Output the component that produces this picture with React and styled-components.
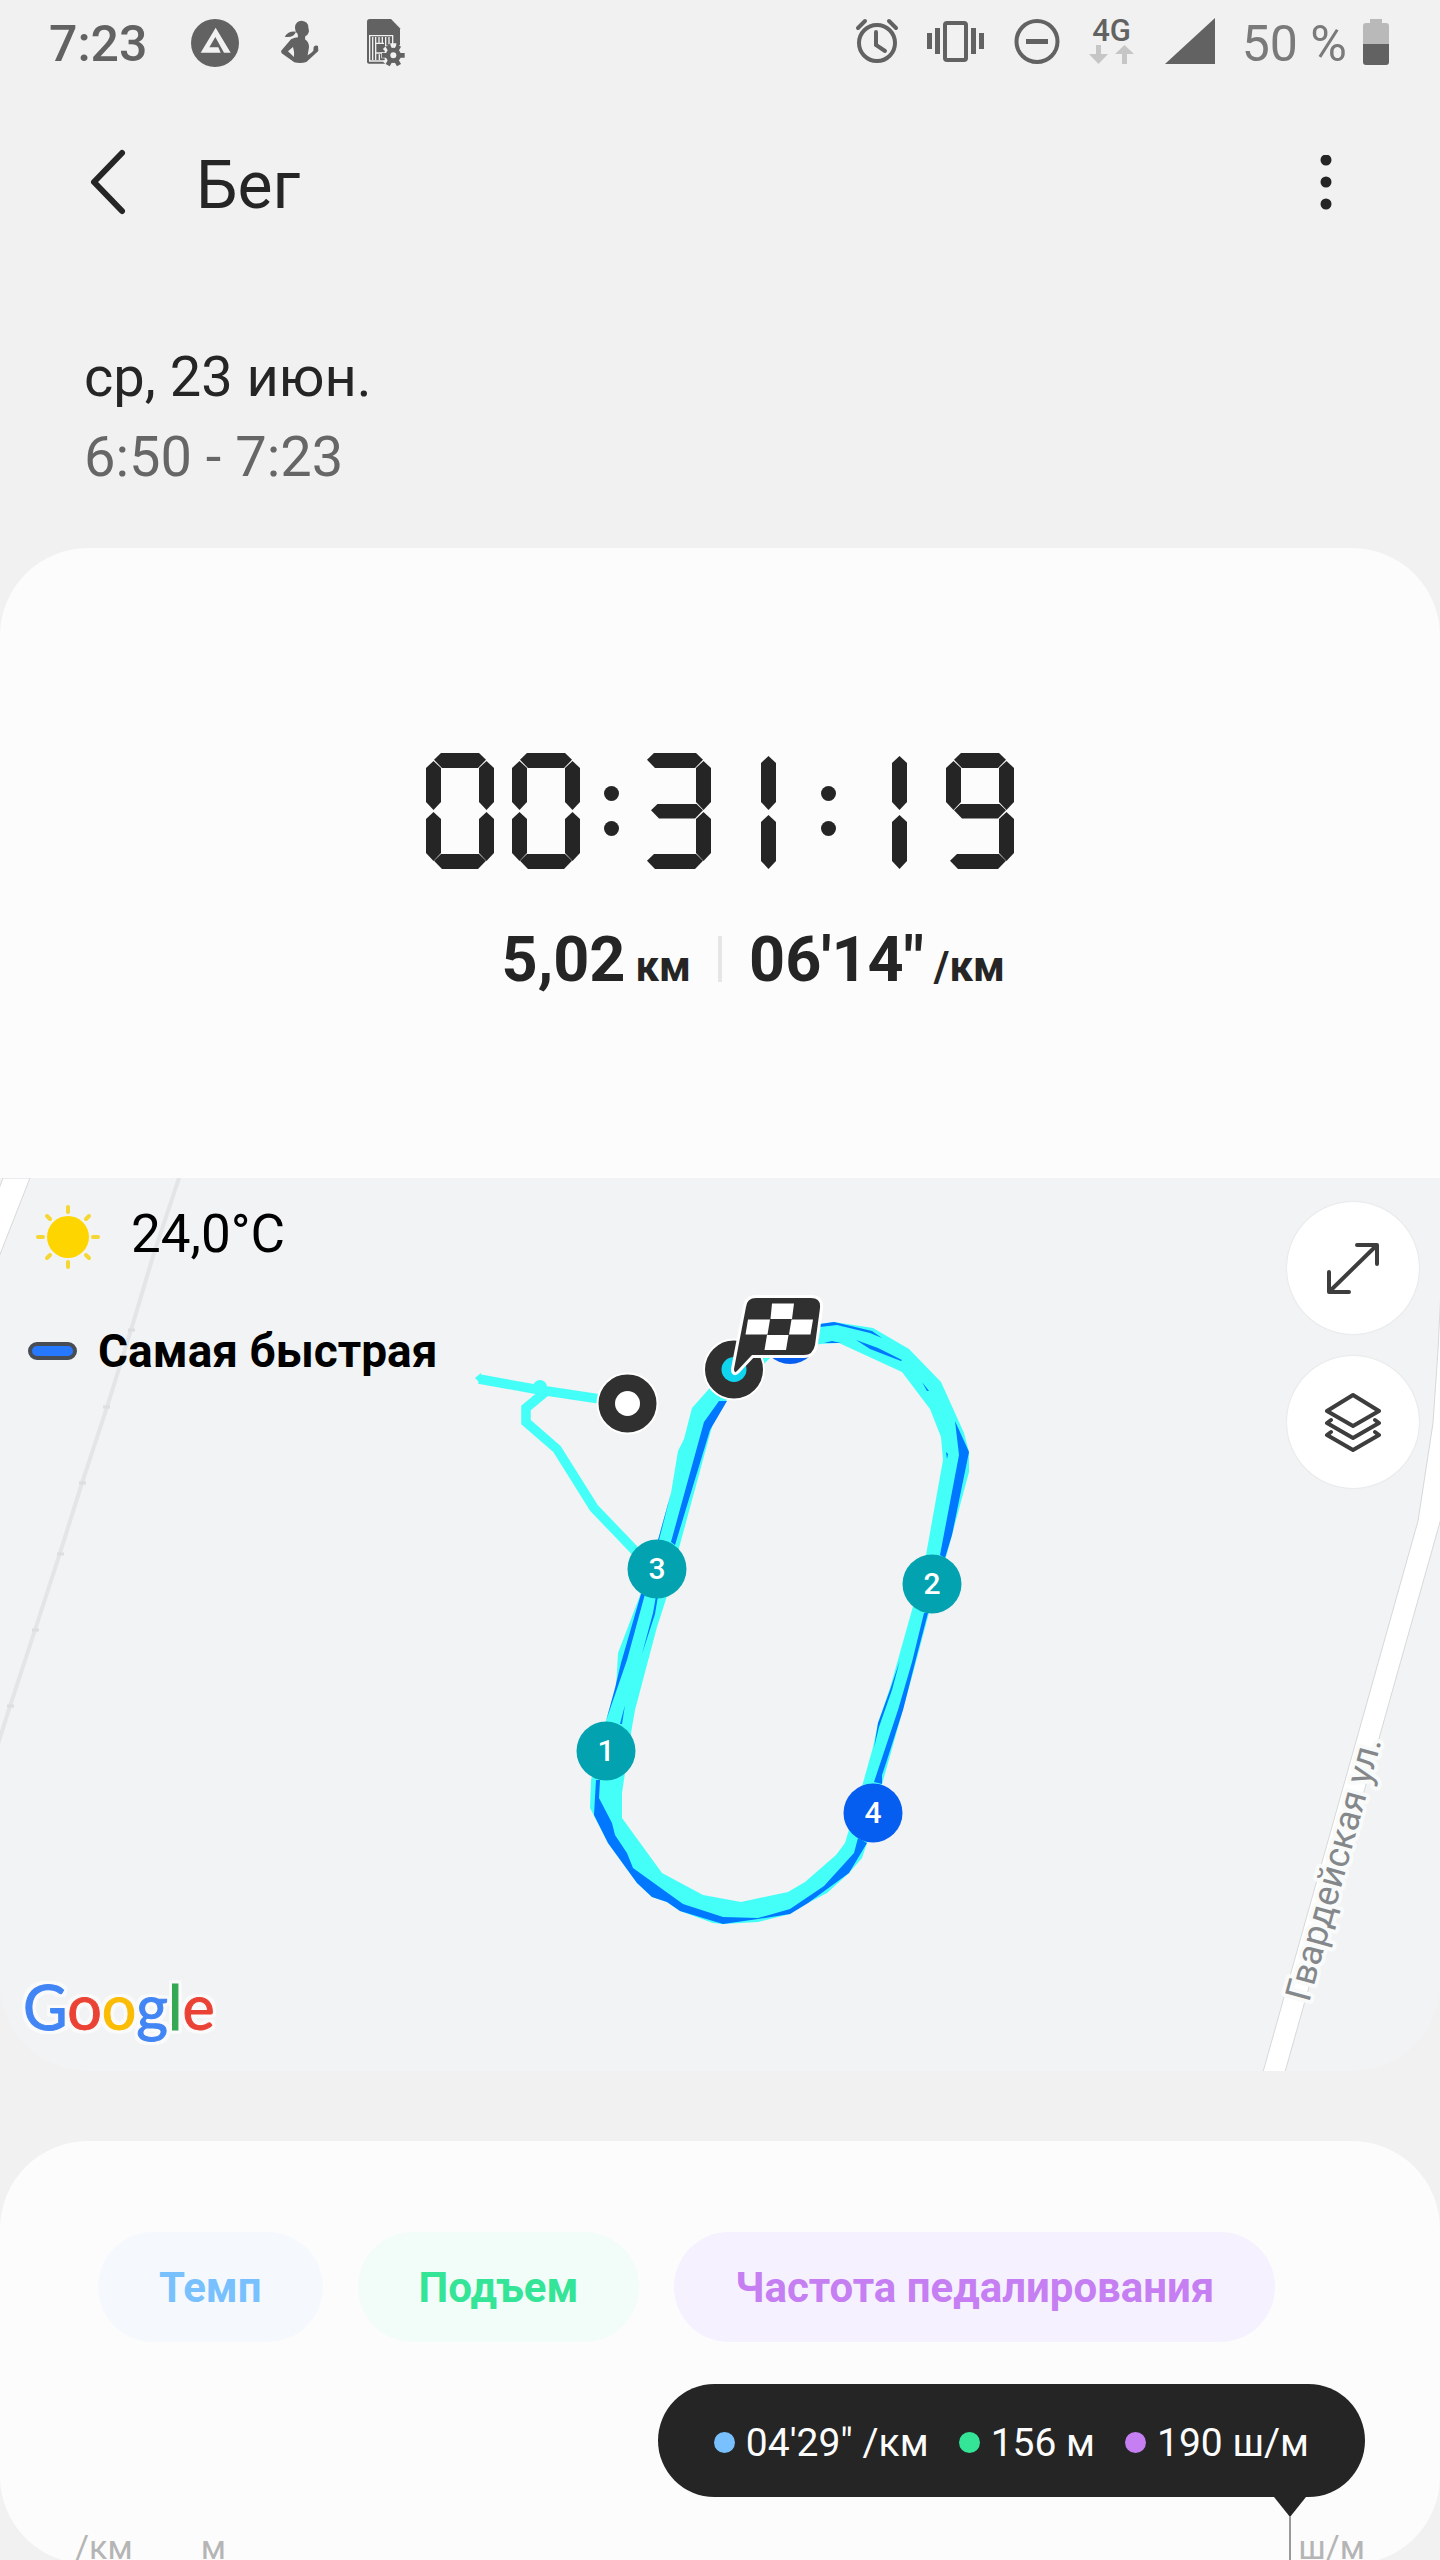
import { useState } from 'react';
import styled, { createGlobalStyle } from 'styled-components';

const GlobalStyle = createGlobalStyle`
    * {
        box-sizing: border-box;
    }

    body {
        margin: 0;
        background-color: #f1f1f1;
        font-family: Roboto, 'Noto Sans', sans-serif;
        color: #252525;
    }

    button {
        padding: 0;
        border: none;
        background: none;
        font-family: inherit;
        color: inherit;
        cursor: pointer;
    }

    svg {
        display: block;
    }
`;

const Screen = styled.div`
    height: 100vh;
    overflow-x: hidden;
    overflow-y: auto;
    scrollbar-width: none;
    background-color: #f1f1f1;
`;

/* status bar */

const StatusBar = styled.div`
    display: flex;
    justify-content: space-between;
    align-items: center;
    height: 86px;
    padding: 0 51px 0 49px;
    color: #626262;
`;

const StatusGroup = styled.div`
    display: flex;
    align-items: center;
    gap: ${({ $gap }) => $gap}px;
`;

const Clock = styled.time`
    padding: 2px 6px 0 0;
    font-size: 50px;
    font-weight: 500;
    line-height: 58px;
`;

const Percent = styled.span`
    padding: 2px 0 0 8px;
    font-size: 50px;
    line-height: 58px;
    color: #7a7a7a;
`;

const NoticeIcon = styled.svg`
    width: 48px;
    height: 48px;
    fill: #626262;
`;

const SlotIcon = styled.svg`
    width: 57px;
    height: 58px;
    fill: #626262;
    overflow: visible;
`;

const BatteryIcon = styled.svg`
    width: 26px;
    height: 58px;
`;

/* header */

const Header = styled.header`
    display: flex;
    align-items: center;
    height: 194px;
    padding: 0 68px 0 62px;
`;

const IconButton = styled.button`
    display: flex;
    justify-content: center;
    align-items: center;
    width: 92px;
    height: 92px;
`;

const Title = styled.h1`
    flex: 1;
    margin: 0;
    padding: 5px 0 0 42px;
    font-size: 66px;
    font-weight: 400;
    line-height: 80px;
`;

const DateBlock = styled.div`
    padding: 57px 84px 51px;
    font-size: 56px;
    line-height: 80px;
`;

const DateLine = styled.div`
    color: ${({ $muted }) => ($muted ? '#666' : '#252525')};
`;

/* summary card */

const SummaryCard = styled.section`
    padding: 205px 0 194px;
    border-radius: 88px 88px 0 0;
    background-color: #fcfcfc;
`;

const Timer = styled.div`
    display: flex;
    justify-content: center;
    align-items: center;
    gap: 24px;
`;

const DigitPair = styled.div`
    display: flex;
    gap: 18px;
`;

const DigitBox = styled.div`
    display: grid;
    width: 68px;
    height: 116px;
    padding-right: ${({ $narrow }) => ($narrow ? 21 : 0)}px;
`;

const Bar = styled.i`
    grid-area: 1 / 1;
    justify-self: end;
    align-self: ${({ $at }) => $at};
    width: ${({ $wide }) => ($wide ? 56 : 52)}px;
    height: 15px;
    margin-right: 8px;
    background-color: #252525;
    clip-path: polygon(0 45%, 7px 0, calc(100% - 7px) 0, 100% 45%, calc(100% - 8px) 100%, 8px 100%);
`;

const Post = styled.i`
    grid-area: 1 / 1;
    justify-self: ${({ $side }) => $side};
    align-self: ${({ $at }) => $at};
    width: 15px;
    height: ${({ $long }) => ($long ? 54 : 49)}px;
    margin: ${({ $long }) => ($long ? '3px 0 0' : '8px 0')};
    background-color: #252525;
    clip-path: polygon(50% 0, 100% 7px, 100% calc(100% - 8px), 50% 100%, 0 calc(100% - 8px), 0 7px);
`;

const Colon = styled.div`
    display: flex;
    flex-direction: column;
    gap: 20px;

    i {
        width: 15px;
        height: 15px;
        border-radius: 50%;
        background-color: #252525;
    }
`;

const Totals = styled.div`
    display: grid;
    grid-template-columns: 1fr 4px 1fr;
    column-gap: 27px;
    margin-top: 67px;
    font-weight: 700;
    line-height: 48px;
`;

const Total = styled.div`
    display: flex;
    justify-content: ${({ $end }) => ($end ? 'flex-end' : 'flex-start')};
    align-items: baseline;
    gap: 10px;
    height: 48px;
    font-size: 63px;
`;

const Unit = styled.span`
    font-size: 42px;
`;

const Divider = styled.div`
    height: 46px;
    background-color: #e6e6e6;
`;

/* map */

const MapArea = styled.section`
    display: grid;
    overflow: hidden;
    border-radius: 0 0 88px 88px;
    background-color: #f1f3f4;

    > * {
        grid-area: 1 / 1;
    }
`;

const MapCanvas = styled.svg`
    width: 100%;
    height: 893px;
`;

const MapOverlay = styled.div`
    display: flex;
    justify-content: space-between;
    padding: 24px 21px 28px 22px;
`;

const MapInfo = styled.div`
    display: flex;
    flex-direction: column;
    color: #000;
`;

const Weather = styled.div`
    display: flex;
    align-items: flex-start;
    gap: 27px;
    height: 70px;
    padding-left: 10px;
    font-size: 53px;
    line-height: 64px;
`;

const Legend = styled.div`
    display: flex;
    align-items: center;
    gap: 21px;
    margin-top: 49px;
    padding-left: 6px;
    font-size: 46px;
    font-weight: 700;
    line-height: 60px;
`;

const LegendMark = styled.span`
    width: 49px;
    height: 18px;
    border: 4px solid #484c55;
    border-radius: 9px;
    background-color: #2678ff;
`;

const Wordmark = styled.div`
    margin-top: auto;
    padding-left: 1px;
    font-family: Lato, Roboto, sans-serif;
    font-size: 61px;
    line-height: 72px;
    -webkit-text-stroke: 1px;
    filter: drop-shadow(3px 0 0 #fafafa) drop-shadow(-3px 0 0 #fafafa) drop-shadow(0 3px 0 #fafafa) drop-shadow(0 -3px 0 #fafafa);
`;

const Letter = styled.span`
    color: ${({ $color }) => $color};
`;

const MapButtons = styled.div`
    display: flex;
    flex-direction: column;
    gap: 22px;
`;

const RoundButton = styled.button`
    display: flex;
    justify-content: center;
    align-items: center;
    width: 132px;
    height: 132px;
    border-radius: 50%;
    background-color: #fff;
    box-shadow: 0 0 2px rgba(0, 0, 0, 0.12);
`;

const LineIcon = styled.svg`
    width: 60px;
    height: 60px;
    fill: none;
    stroke: #3d3d3d;
    stroke-width: 4;
    stroke-linecap: round;
    stroke-linejoin: round;
`;

/* chart card */

const ChartCard = styled.section`
    margin-top: 70px;
    padding: 91px 75px 0;
    border-radius: 88px;
    background-color: #fcfcfc;
`;

const Chips = styled.div`
    display: flex;
    gap: 35px;
    padding-left: 23px;
`;

const Chip = styled.button`
    height: 110px;
    padding: 2px 61px 0;
    border-radius: 55px;
    background-color: ${({ $bg }) => $bg};
    color: ${({ $color }) => $color};
    font-size: 42px;
    font-weight: 700;
    line-height: 50px;
    white-space: nowrap;
    opacity: ${({ $off }) => ($off ? 0.4 : 1)};
`;

const Tooltip = styled.div`
    position: relative;
    display: flex;
    align-items: center;
    gap: 30px;
    width: fit-content;
    height: 113px;
    margin: 42px 0 0 auto;
    padding: 4px 56px 0;
    border-radius: 57px;
    background-color: #252525;
    color: #fcfcfc;
    font-size: 39px;
    line-height: 48px;

    &::before {
        content: '';
        position: absolute;
        top: 100%;
        right: 59px;
        border: 16px solid transparent;
        border-top: 20px solid #252525;
        border-bottom: 0;
    }

    &::after {
        content: '';
        position: absolute;
        top: calc(100% + 19px);
        right: 74px;
        width: 2px;
        height: 48px;
        background-color: #999;
    }
`;

const Reading = styled.span`
    display: flex;
    align-items: center;
    gap: 11px;
    white-space: nowrap;

    &::before {
        content: '';
        width: 21px;
        height: 21px;
        border-radius: 50%;
        background-color: ${({ $color }) => $color};
    }
`;

const AxisLabels = styled.div`
    display: flex;
    gap: 68px;
    margin-top: 33px;
    color: #b5b5b5;
    font-size: 34px;
    line-height: 34px;

    span:last-child {
        margin-left: auto;
    }
`;

// a: top, b: top right, c: bottom right, d: bottom, e: bottom left, f: top left, g: middle
const SEGMENTS = {
    0: 'abcdef',
    1: 'bc',
    2: 'abdeg',
    3: 'abcdg',
    4: 'bcfg',
    5: 'acdfg',
    6: 'acdefg',
    7: 'abc',
    8: 'abcdefg',
    9: 'abcdfg',
};

const Digit = ({ value }) => {
    const on = (s) => SEGMENTS[value].includes(s);
    return (
        <DigitBox $narrow={value === '1'}>
            {on('a') && <Bar $at="start" $wide={!on('f')} />}
            {on('g') && <Bar $at="center" />}
            {on('d') && <Bar $at="end" $wide={!on('e')} />}
            {on('f') && <Post $side="start" $at="start" />}
            {on('b') && <Post $side="end" $at="start" $long={!on('a')} />}
            {on('e') && <Post $side="start" $at="end" />}
            {on('c') && <Post $side="end" $at="end" $long={!on('d')} />}
        </DigitBox>
    );
};

const SegmentTimer = ({ time }) => {
    const [h, m, s] = time.split(':');
    const pair = (v) => (
        <DigitPair>
            <Digit value={v[0]} />
            <Digit value={v[1]} />
        </DigitPair>
    );
    return (
        <Timer role="img" aria-label={time}>
            {pair(h)}
            <Colon><i /><i /></Colon>
            {pair(m)}
            <Colon><i /><i /></Colon>
            {pair(s)}
        </Timer>
    );
};

const StatusIcons = () => (
    <StatusGroup $gap={21}>
        <SlotIcon viewBox="850 14 57 58">
            <circle cx="878" cy="43" r="18" fill="none" stroke="#626262" strokeWidth="4" />
            <path d="M877 32v13l9 6M859 28l7-7M897 28l-7-7" fill="none" stroke="#626262" strokeWidth="4" strokeLinecap="round" />
        </SlotIcon>
        <SlotIcon viewBox="929 14 57 58">
            <rect x="947" y="23" width="21" height="37" rx="2" fill="none" stroke="#626262" strokeWidth="4" />
            <path d="M929 33h5v16h-5zM937 28h5v26h-5zM973 28h5v26h-5zM981 33h5v16h-5z" />
        </SlotIcon>
        <SlotIcon viewBox="1005 14 57 58">
            <circle cx="1037" cy="41.5" r="20.5" fill="none" stroke="#626262" strokeWidth="4" />
            <path d="M1026 39h22v5h-22z" />
        </SlotIcon>
        <SlotIcon viewBox="1084 14 57 58">
            <text x="1112.5" y="41" fontSize="31" fontWeight="500" textAnchor="middle">4G</text>
            <path d="M1097 45h5v9h7l-9.500 10-9.500-10h7zM1123 64h5v-10h7l-9.500-9-9.500 9h7z" fill="#c6c6c6" />
        </SlotIcon>
        <SlotIcon viewBox="1161 14 57 58">
            <path d="M1215 18v46h-50z" />
        </SlotIcon>
    </StatusGroup>
);

const Gear = () => (
    <g>
        <path d="M1174 127v72M1138 163h72M1149 138l50 50M1199 138l-50 50" stroke="#f1f1f1" strokeWidth="18" />
        <circle cx="1174" cy="163" r="28" fill="#f1f1f1" />
        <path d="M1140 163h68M1157 133.500l34 59M1191 133.500l-34 59" stroke="#626262" strokeWidth="14" />
        <circle cx="1174" cy="163" r="23" />
        <circle cx="1174" cy="163" r="9" fill="#f1f1f1" />
    </g>
);

const KM_MARKS = [
    { n: 1, x: 606, y: 1751, color: '#03a2b0' },
    { n: 2, x: 932, y: 1584, color: '#03a2b0' },
    { n: 3, x: 657, y: 1569, color: '#03a2b0' },
    { n: 4, x: 873, y: 1813, color: '#065ef0' },
];

const RouteMap = () => (
    <MapCanvas viewBox="0 1178 1440 893" preserveAspectRatio="xMidYMid slice">
        {/* roads */}
        <path d="M3 1178L-3 1194V1262L30 1178Z" fill="#fff" stroke="#d6d8da" />
        <path d="M179 1178L154 1253L131 1330L107 1407L82 1483L60 1553L35 1630L10 1706L-2 1744" fill="none" stroke="#e3e5e6" strokeWidth="4" />
        <path d="M128 1330h7M103 1407h7M79 1483h7M57 1554h7M32 1630h7M7 1706h7" stroke="#dcdee0" strokeWidth="3" />
        <path d="M1442 1270L1438 1350L1433 1423L1418 1521L1263 2072H1285L1440 1522L1450 1480V1270Z" fill="#fff" stroke="#d6d8da" />
        <text
            transform="translate(1309 2003) rotate(-74.500)"
            fontSize="36"
            fill="#85888a"
            stroke="#f9fafa"
            strokeWidth="8"
            strokeLinejoin="round"
            paintOrder="stroke"
        >
            Гвардейская ул.
        </text>

        {/* track */}
        <g fill="none" stroke="#43fff8" strokeWidth="9.500">
            <path d="M479 1379L540 1390L600 1399M540 1387L544 1393L526 1408V1422L557 1449L594 1508L640 1556" />
        </g>
        <circle cx="540" cy="1387" r="7" fill="#43fff8" />
        <path d="M475 1378l6-5v11z" fill="#43fff8" />
        <path
            fill="#43fff8"
            fillRule="evenodd"
            d="M740 1352L708 1390L692 1408L684 1439L678 1451L671 1493L658 1540L641 1593L618 1653L616 1690L607 1717L591 1780L590 1808L608 1843L637 1883L652 1897L667 1902L680 1911L713 1923L723 1924L758 1922L790 1914L808 1903L827 1893L849 1873L862 1858L868 1840L884 1777L890 1756L913 1673L929 1613L946 1557L952 1535L969 1472V1452L964 1433L941 1382L909 1349L873 1328L834 1322L820 1324L775 1335Z
            M770 1358L820 1344L839 1343L902 1372L930 1409L941 1437L943 1460L926 1555L912 1610L890 1688L878 1723L873 1747L863 1783L848 1833L845 1843L836 1855L805 1882L788 1892L741 1902L703 1895L662 1873L622 1818V1793L625 1773L632 1727L635 1710L657 1627L668 1593L679 1548L713 1423L726 1401Z"
        />
        <g fill="#0077ff">
            <path d="M719 1401H727L710 1430L675 1545L671 1542L704 1422Z" />
            <path d="M641 1594H645L627 1660L608 1715L606 1721L615 1688L621 1663Z" />
            <path d="M596 1780H600L599 1798L612 1823L615 1835L627 1853L633 1868L683 1904L723 1917L758 1918L790 1909L824 1886L854 1853L858 1838L867 1843L849 1873L808 1903L790 1914L758 1919L723 1924L680 1911L667 1902L652 1897L637 1883L608 1843L594 1815Z" />
            <path d="M928 1613L917 1655L903 1710L887 1760L882 1775V1784L874 1782L898 1710L912 1662L924 1613Z" />
            <path d="M900 1660L892 1690L879 1727L874 1748L878 1723L890 1690Z" />
            <path d="M955 1421L969 1452L952 1535L945 1558L940 1555L959 1455Z" />
            <path d="M820 1324L834 1322L872 1331L882 1338L870 1333L837 1325L820 1327Z" />
            <path d="M856 1340L878 1348L902 1360L901 1361L870 1349Z" />
            <path d="M824 1343L832 1341L841 1343Z" />
            <path d="M922 1382L929 1391L927 1391Z" />
            <path d="M946 1452L948 1454L947 1459Z" />
            <path d="M671 1493L659 1540H658Z" />
            <path d="M658 1596L655 1614L642 1654L653 1613L656 1596Z" />
            <path d="M625 1705L622 1724H620Z" />
        </g>

        {/* markers */}
        <circle cx="790" cy="1335" r="29" fill="#065ef0" />
        {KM_MARKS.map(({ n, x, y, color }) => (
            <g key={n}>
                <circle cx={x} cy={y} r="29.500" fill={color} />
                <text x={x} y={y + 10} fill="#fff" fontSize="30" fontWeight="500" textAnchor="middle">{n}</text>
            </g>
        ))}
        <g fill="#303030" stroke="#fff" strokeWidth="2">
            <circle cx="627.500" cy="1403.500" r="30" />
            <circle cx="734" cy="1369.500" r="30" />
        </g>
        <circle cx="627.500" cy="1403.500" r="12.500" fill="#fff" />
        <circle cx="734" cy="1369.500" r="12.500" fill="#10d5ee" />
        <path
            d="M756 1298H811Q821 1298 820 1308L815 1345Q813 1355 804 1355H752L737 1371Q734 1374 734 1369L746 1307Q747 1298 756 1298Z"
            fill="#303030"
            stroke="#fff"
            strokeWidth="6"
            paintOrder="stroke"
        />
        <path
            d="M772 1303.500H794L792 1319H770.500ZM748 1319.500H770L767.500 1334.500H745.500ZM791.500 1319.500H813L810.500 1334.500H789ZM767 1335H788.500L786 1350H764.500Z"
            fill="#fff"
        />
    </MapCanvas>
);

const WORDMARK = [
    ['G', '#4285f4'],
    ['o', '#ea4335'],
    ['o', '#fbbc05'],
    ['g', '#4285f4'],
    ['l', '#34a853'],
    ['e', '#ea4335'],
];

const METRICS = [
    { id: 'pace', label: 'Темп', reading: '04\'29" /км', color: '#78c1fe', bg: '#f5f9fd' },
    { id: 'climb', label: 'Подъем', reading: '156 м', color: '#34e497', bg: '#f2fcf8' },
    { id: 'cadence', label: 'Частота педалирования', reading: '190 ш/м', color: '#c57ff2', bg: '#f5f1fe' },
];

const App = () => {
    const [hidden, setHidden] = useState([]);

    const toggleMetric = (id) => {
        setHidden((prev) => (prev.includes(id) ? prev.filter((v) => v !== id) : [...prev, id]));
    };

    return (
        <Screen>
            <GlobalStyle />
            <StatusBar>
                <StatusGroup $gap={38}>
                    <Clock>7:23</Clock>
                    <NoticeIcon viewBox="567 54 144 144">
                        <circle cx="639" cy="126" r="72" />
                        <path d="M641 80L596 155H656L649 139H622L640 108L666 155H686Z" fill="#f1f1f1" />
                    </NoticeIcon>
                    <NoticeIcon viewBox="824 57 144 144">
                        <path d="M878 82Q880 62 898 62Q918 64 918 82L920 94Q917 106 909 108L908 118Q920 126 920 142L916 166Q926 160 933 152L934 141Q940 134 947 138L948 153L912 186Q895 192 876 187L838 160L836 153L866 118Q878 112 887 112L886 102Q878 96 878 82ZM872 141L857 154L875 171Q877 156 872 141Z" fillRule="evenodd" />
                        <path d="M847 110Q858 92 881 95Q874 114 847 110Z" />
                    </NoticeIcon>
                    <NoticeIcon viewBox="1083 54 144 144">
                        <path d="M1103 54H1167L1194 82V188H1101Q1095 188 1095 182V62Q1095 54 1103 54Z" />
                        <path d="M1103 104H1172V180H1103ZM1112 108V177M1121 127H1146M1121 108V177M1131 108V127M1141 108V127M1151 108V135M1161 108V130M1121 156H1142M1132 160V177" fill="none" stroke="#f1f1f1" strokeWidth="4" />
                        <Gear />
                    </NoticeIcon>
                </StatusGroup>
                <StatusGroup $gap={16}>
                    <StatusIcons />
                    <Percent>50 %</Percent>
                    <BatteryIcon viewBox="1363 14 26 58">
                        <path d="M1370 19h12v4h4q3 0 3 3v18h-26v-18q0-3 3-3h4z" fill="#b9b9b9" />
                        <path d="M1363 44h26v18q0 3-3 3h-20q-3 0-3-3z" fill="#626262" />
                    </BatteryIcon>
                </StatusGroup>
            </StatusBar>

            <Header>
                <IconButton type="button" aria-label="Назад">
                    <svg width="40" height="70" viewBox="0 0 40 70">
                        <path d="M34 5L6 34L34 63" fill="none" stroke="#252525" strokeWidth="6" strokeLinecap="round" strokeLinejoin="round" />
                    </svg>
                </IconButton>
                <Title>Бег</Title>
                <IconButton type="button" aria-label="Меню">
                    <svg width="12" height="56" viewBox="0 0 12 56" fill="#252525">
                        <circle cx="6" cy="5" r="5.500" />
                        <circle cx="6" cy="27" r="5.500" />
                        <circle cx="6" cy="49" r="5.500" />
                    </svg>
                </IconButton>
            </Header>

            <DateBlock>
                <DateLine>ср, 23 июн.</DateLine>
                <DateLine $muted>6:50 - 7:23</DateLine>
            </DateBlock>

            <SummaryCard>
                <SegmentTimer time="00:31:19" />
                <Totals>
                    <Total $end>5,02<Unit>км</Unit></Total>
                    <Divider />
                    <Total>06'14"<Unit>/км</Unit></Total>
                </Totals>
            </SummaryCard>

            <MapArea>
                <RouteMap />
                <MapOverlay>
                    <MapInfo>
                        <Weather>
                            <svg width="72" height="70" viewBox="0 0 72 70">
                                <circle cx="36" cy="35" r="21" fill="#ffd500" />
                                <path d="M36 5v5M36 60v5M6 35h5M61 35h5M15 14l3 3M54 53l3 3M57 14l-3 3M18 53l-3 3" stroke="#f5d633" strokeWidth="4" strokeLinecap="round" />
                            </svg>
                            24,0°C
                        </Weather>
                        <Legend><LegendMark />Самая быстрая</Legend>
                        <Wordmark>
                            {WORDMARK.map(([char, color], i) => (
                                <Letter key={i} $color={color}>{char}</Letter>
                            ))}
                        </Wordmark>
                    </MapInfo>
                    <MapButtons>
                        <RoundButton type="button" aria-label="Развернуть">
                            <LineIcon viewBox="0 0 60 60">
                                <path d="M7 53L53 8M34 7H54V26M6 34V54H26" />
                            </LineIcon>
                        </RoundButton>
                        <RoundButton type="button" aria-label="Слои">
                            <LineIcon viewBox="0 0 60 60">
                                <path d="M30 3L56 19L30 34L4 19ZM8 28L4 31L30 46L56 31L52 28M8 40L4 43L30 58L56 43L52 40" />
                            </LineIcon>
                        </RoundButton>
                    </MapButtons>
                </MapOverlay>
            </MapArea>

            <ChartCard>
                <Chips>
                    {METRICS.map(({ id, label, color, bg }) => (
                        <Chip
                            key={id}
                            type="button"
                            $color={color}
                            $bg={bg}
                            $off={hidden.includes(id)}
                            aria-pressed={!hidden.includes(id)}
                            onClick={() => toggleMetric(id)}
                        >
                            {label}
                        </Chip>
                    ))}
                </Chips>
                <Tooltip>
                    {METRICS.filter(({ id }) => !hidden.includes(id)).map(({ id, reading, color }) => (
                        <Reading key={id} $color={color}>{reading}</Reading>
                    ))}
                </Tooltip>
                <AxisLabels>
                    <span>/км</span>
                    <span>м</span>
                    <span>ш/м</span>
                </AxisLabels>
            </ChartCard>
        </Screen>
    );
};

export default App;
